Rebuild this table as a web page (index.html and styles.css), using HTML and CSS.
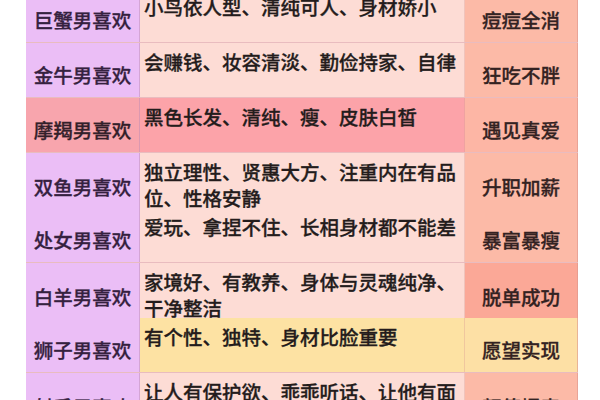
FILE: index.html
```html
<!DOCTYPE html>
<html lang="zh">
<head>
<meta charset="utf-8">
<link rel="stylesheet" href="styles.css">
</head>
<body>
<div class="table">
  <div class="row">
    <div class="sign">巨蟹男喜欢</div>
    <div class="desc">小鸟依人型、清纯可人、身材娇小</div>
    <div class="res">痘痘全消</div>
  </div>
  <div class="row">
    <div class="sign">金牛男喜欢</div>
    <div class="desc">会赚钱、妆容清淡、勤俭持家、自律</div>
    <div class="res">狂吃不胖</div>
  </div>
  <div class="row red">
    <div class="sign">摩羯男喜欢</div>
    <div class="desc">黑色长发、清纯、瘦、皮肤白皙</div>
    <div class="res">遇见真爱</div>
  </div>
  <div class="row">
    <div class="sign">双鱼男喜欢</div>
    <div class="desc">独立理性、贤惠大方、注重内在有品位、性格安静</div>
    <div class="res">升职加薪</div>
  </div>
  <div class="row">
    <div class="sign">处女男喜欢</div>
    <div class="desc">爱玩、拿捏不住、长相身材都不能差</div>
    <div class="res">暴富暴瘦</div>
  </div>
  <div class="row deep">
    <div class="sign">白羊男喜欢</div>
    <div class="desc">家境好、有教养、身体与灵魂纯净、干净整洁</div>
    <div class="res">脱单成功</div>
  </div>
  <div class="row yellow">
    <div class="sign">狮子男喜欢</div>
    <div class="desc">有个性、独特、身材比脸重要</div>
    <div class="res">愿望实现</div>
  </div>
  <div class="row">
    <div class="sign">射手男喜欢</div>
    <div class="desc">让人有保护欲、乖乖听话、让他有面子</div>
    <div class="res">颜值爆表</div>
  </div>
</div>
</body>
</html>
```

FILE: styles.css
```css
html, body {
  margin: 0;
  padding: 0;
  background: #ffffff;
  overflow: hidden;
}
body {
  width: 600px;
  height: 400px;
  font-family: "Noto Sans CJK SC", "Noto Sans", sans-serif;
}
.table {
  margin: -12px 0 0 26px;
  width: 552px;
  display: flex;
  flex-direction: column;
  gap: 1px;
  background: #e9bcbf;
}
.row {
  display: grid;
  grid-template-columns: 114px 325px 113px;
  height: 54px;
}
.sign, .desc, .res {
  font-size: 19.5px;
  font-weight: 500;
  -webkit-text-stroke: 0.3px currentColor;
  box-sizing: border-box;
}
.sign {
  background: #ebbef6;
  color: #35213f;
  display: flex;
  align-items: center;
  justify-content: center;
  padding-top: 8px;
  border-right: 1px solid rgba(190, 140, 180, 0.5);
}
.desc {
  background: #fddcd5;
  color: #241c1c;
  line-height: 26px;
  padding: 6px 0 0 4px;
  border-right: 1px solid rgba(220, 160, 150, 0.4);
}
.res {
  background: #fcbaa7;
  color: #332222;
  display: flex;
  align-items: center;
  justify-content: center;
  padding-top: 8px;
  border-right: 1px solid rgba(220, 150, 140, 0.6);
}
.red .sign {
  background: #f8a5ad;
  color: #33202a;
}
.red .desc {
  background: #fca3a9;
}
.red .res {
  background: #fdb6a5;
}
.deep .res {
  background: #fba897;
}
.yellow .desc {
  background: #fde2a3;
}
.yellow .res {
  background: #fde0a5;
}
```
